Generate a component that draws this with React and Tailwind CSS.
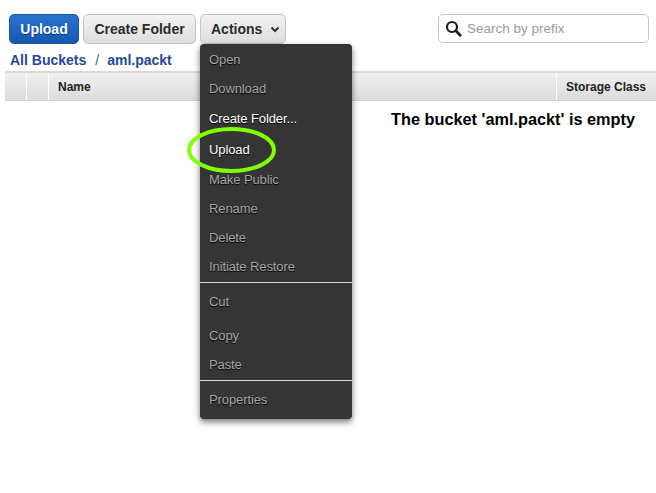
const MenuItem = ({ label, on, h }) => (
  <div
    className={`flex items-center pl-[9px] text-[13px] tracking-[-0.1px] [text-shadow:0_1px_1px_#000] ${h} ${
      on ? "text-white font-medium" : "text-[#a6a6a6]"
    }`}
  >
    {label}
  </div>
);

const Divider = () => <div className="h-px bg-[#d8d8d8]" />;

const App = () => {
  return (
    <div className="relative w-[656px] h-[493px] bg-white overflow-hidden font-['Liberation_Sans',Arial,sans-serif]">
      {/* Toolbar */}
      <div className="flex items-start pt-[14px] pl-[9px] pr-[7px]">
        <button className="w-[70px] h-[30px] rounded-[5px] border border-[#1a55ab] bg-gradient-to-b from-[#2a73cf] to-[#1557b0] text-white text-[14px] font-bold [text-shadow:0_1px_1px_#0b3a80]">
          Upload
        </button>
        <button className="ml-1 w-[113px] h-[30px] rounded-[5px] border border-[#c4c4c4] bg-gradient-to-b from-[#f2f2f2] to-[#dedede] text-[#2b2b2b] text-[14px] font-bold">
          Create Folder
        </button>
        <button className="ml-1 w-[86px] h-[30px] rounded-[5px] border border-[#c4c4c4] bg-gradient-to-b from-[#f2f2f2] to-[#dedede] text-[#2b2b2b] text-[14px] font-bold flex items-center pl-[10px]">
          Actions
          <svg className="ml-[8px]" width="10" height="7" viewBox="0 0 10 7" fill="none" stroke="#333" strokeWidth="2">
            <path d="M1.5 1.5 L5 5 L8.5 1.5" />
          </svg>
        </button>
        <div className="ml-auto w-[211px] h-[29px] rounded-[5px] border border-[#c8c8c8] flex items-center pl-[6px]">
          <svg width="17" height="17" viewBox="0 0 17 17" fill="none" stroke="#1c1c1c">
            <circle cx="7" cy="7" r="5" strokeWidth="2.2" />
            <path d="M10.8 10.8 L15.2 15.2" strokeWidth="2.8" strokeLinecap="round" />
          </svg>
          <span className="ml-[5px] pt-[2px] text-[13.5px] text-[#9b9b9b]">Search by prefix</span>
        </div>
      </div>

      {/* Breadcrumb */}
      <div className="pl-[10px] pt-[8px] h-[27px] text-[14px] font-bold text-[#1f4a9c] leading-[17px]">
        All Buckets
        <span className="ml-[9px] font-normal text-[#3a5fa8]">/</span>
        <span className="ml-[8px]">aml.packt</span>
      </div>

      {/* Table header */}
      <div className="ml-[5px] border-t-2 border-b border-t-[#d9d9d9] border-b-[#cfcfcf] h-[30px] flex bg-gradient-to-b from-[#f0f0f0] to-[#dcdcdc] text-[12px] font-bold text-[#222]">
        <div className="w-[22px] border-r border-white" />
        <div className="w-[22px] border-r border-white" />
        <div className="w-[508px] border-r border-white flex items-center pl-[9px]">Name</div>
        <div className="flex-1 flex items-center pl-[9px]">Storage Class</div>
      </div>

      {/* Empty message */}
      <div className="pt-[6px] pr-[21px] text-right text-[16.3px] font-bold text-black">
        The bucket 'aml.packt' is empty
      </div>

      {/* Actions menu */}
      <div className="absolute left-[200px] top-[44px] w-[152px] h-[375px] bg-[#353535] rounded-[4px] shadow-[0_3px_6px_rgba(0,0,0,0.55)] pt-[1px]">
        <MenuItem label="Open" h="h-[29px]" />
        <MenuItem label="Download" h="h-[30px]" />
        <MenuItem label="Create Folder..." on h="h-[30px]" />
        <MenuItem label="Upload" on h="h-[32px]" />
        <MenuItem label="Make Public" h="h-[28px]" />
        <MenuItem label="Rename" h="h-[29px]" />
        <MenuItem label="Delete" h="h-[29px]" />
        <MenuItem label="Initiate Restore" h="h-[30px] pb-px" />
        <Divider />
        <MenuItem label="Cut" h="h-[37px]" />
        <MenuItem label="Copy" h="h-[31px]" />
        <MenuItem label="Paste" h="h-[29px] pb-[2px]" />
        <Divider />
        <MenuItem label="Properties" h="h-[37px]" />
      </div>

      {/* Green highlight */}
      <svg className="absolute left-[186px] top-[126px]" width="92" height="48" viewBox="0 0 92 48" fill="none">
        <ellipse cx="45.5" cy="24" rx="42.5" ry="21" stroke="#7fff00" strokeWidth="4" />
      </svg>
    </div>
  );
};

export default App;
